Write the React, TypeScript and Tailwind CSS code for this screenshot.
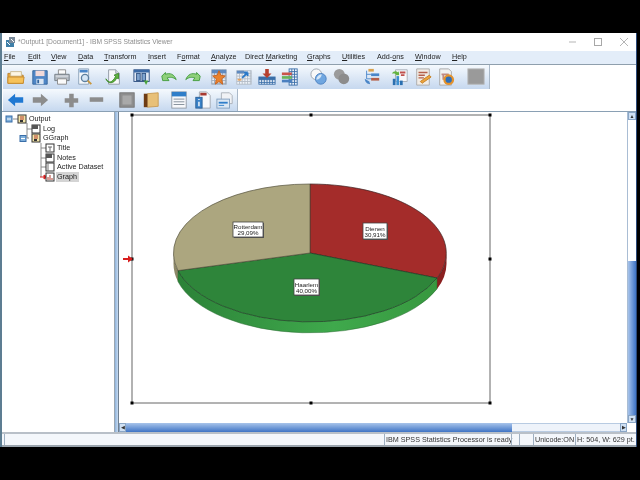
import type { ReactNode } from "react";

const font = "font-['Liberation_Sans',Arial,sans-serif]";

const menus: [string, string, string][] = [
    ["", "F", "ile"],
    ["", "E", "dit"],
    ["", "V", "iew"],
    ["", "D", "ata"],
    ["", "T", "ransform"],
    ["", "I", "nsert"],
    ["F", "o", "rmat"],
    ["", "A", "nalyze"],
    ["Direct ", "M", "arketing"],
    ["", "G", "raphs"],
    ["", "U", "tilities"],
    ["Add-", "o", "ns"],
    ["", "W", "indow"],
    ["", "H", "elp"],
];

const menuSpacing = ["w-[24px]", "w-[23px]", "w-[27px]", "w-[26px]", "w-[44px]", "w-[29px]", "w-[34px]", "w-[34px]", "w-[62px]", "w-[35px]", "w-[35px]", "w-[38px]", "w-[37px]", "w-[30px]"];

function Doc({ children }: { children?: ReactNode }) {
    return (
        <>
            <path d="M4 2h8l4 4v12H4z" fill="#f7f8fb" stroke="#8f97a3" />
            <path d="M12 2v4h4" fill="#dfe4ea" stroke="#8f97a3" />
            {children}
        </>
    );
}

function Grid({ x, y, w, h, color = "#3a6ea8" }: { x: number; y: number; w: number; h: number; color?: string }) {
    const lines = [];
    for (let i = x + 3; i < x + w; i += 3) lines.push(<path key={"v" + i} d={`M${i} ${y}v${h}`} stroke={color} />);
    for (let j = y + 3; j < y + h; j += 3) lines.push(<path key={"h" + j} d={`M${x} ${j}h${w}`} stroke={color} />);
    return (
        <>
            <rect x={x} y={y} width={w} height={h} fill="#eef3fa" stroke={color} />
            {lines}
        </>
    );
}

const toolIcons: Record<string, ReactNode> = {
    folder: (
        <>
            <path d="M1 6h7l2 2h8v9H1z" fill="#e9a83c" stroke="#b9802c" />
            <path d="M4 4h12v5H4z" fill="#fdf6e3" stroke="#c9b98e" />
            <path d="M1 10h18l-1 7H1z" fill="#f6c25a" stroke="#c58a2e" />
        </>
    ),
    save: (
        <>
            <path d="M2 3h16v15H2z" fill="#4f86c6" stroke="#33649c" />
            <rect x="5" y="3" width="10" height="6" fill="#f1d9d9" />
            <rect x="6" y="12" width="8" height="6" fill="#dbe6f3" />
            <rect x="7" y="13" width="2" height="4" fill="#33649c" />
        </>
    ),
    print: (
        <>
            <path d="M6 2h8v5H6z" fill="#fafafa" stroke="#888" />
            <path d="M2 7h16v7H2z" fill="#b5bcc4" stroke="#727a82" />
            <path d="M5 12h10v6H5z" fill="#fafafa" stroke="#888" />
            <path d="M3 9h14" stroke="#e6e9ec" />
        </>
    ),
    preview: (
        <>
            <path d="M3 1h11v17H3z" fill="#f5f8fc" stroke="#8aa0b8" />
            <path d="M4 2h9v3H4z" fill="#4a86c8" />
            <circle cx="10" cy="11" r="4" fill="#d5e6f6" stroke="#5d7f9f" strokeWidth="1.5" />
            <path d="M13 14l4 4" stroke="#c8963c" strokeWidth="2" />
        </>
    ),
    exportDoc: (
        <>
            <Doc />
            <path d="M1 12c3 5 7 5 11-3l-2-1 5-2v6l-2-1c-3 7-10 7-12 1z" fill="#63b33f" stroke="#3d8a2b" />
        </>
    ),
    goto: (
        <>
            <rect x="1" y="2" width="17" height="13" fill="#dfe7f3" stroke="#2d4f80" />
            <rect x="1" y="2" width="17" height="3" fill="#3b6aa6" />
            <rect x="4" y="6" width="4" height="8" fill="#7fa4cf" stroke="#2d4f80" />
            <rect x="10" y="6" width="4" height="8" fill="#7fa4cf" stroke="#2d4f80" />
            <path d="M12 14h5l-2.500 5z" fill="#4aa339" />
        </>
    ),
    undo: <path d="M2 9l4-4v2c5-2 10 0 12 6-3-3-7-3-10-2l2 3H3z" fill="#8ed07a" stroke="#3f9a3a" />,
    redo: <path d="M18 9l-4-4v2c-5-2-10 0-12 6 3-3 7-3 10-2l-2 3h7z" fill="#8ed07a" stroke="#3f9a3a" />,
    pivot: (
        <>
            <Grid x={2} y={2} w={16} h={16} color="#9aa7b5" />
            <rect x="2" y="2" width="16" height="4" fill="#5e8ac0" />
            <path d="M10 3l2 5 5 1-4 3 1 6-4-3-4 3 1-6-4-3 5-1z" fill="#e9822c" stroke="#c8611d" />
        </>
    ),
    chartBuilder: (
        <>
            <Grid x={2} y={3} w={16} h={15} color="#b3bcc7" />
            <rect x="2" y="3" width="8" height="3" fill="#5e8ac0" />
            <path d="M8 11l6-6M14 5h-4M14 5v4" stroke="#2a78c8" strokeWidth="2" fill="none" />
            <rect x="3" y="12" width="4" height="2" fill="#e9a45c" />
        </>
    ),
    insertRows: (
        <>
            <Grid x={1} y={10} w={18} h={8} />
            <rect x="1" y="10" width="18" height="3" fill="#3a6ea8" />
            <path d="M8 1h4v5h3l-5 5-5-5h3z" fill="#b5402f" />
        </>
    ),
    columns: (
        <>
            <Grid x={9} y={1} w={9} h={18} />
            <rect x="1" y="5" width="11" height="3" fill="#c9544a" />
            <rect x="1" y="9" width="11" height="3" fill="#68b35a" />
            <rect x="1" y="13" width="11" height="3" fill="#4a7fc0" />
        </>
    ),
    venn: (
        <>
            <circle cx="7" cy="7" r="6" fill="#f8f8f8" stroke="#9aa3ad" />
            <circle cx="12" cy="12" r="6" fill="#6fa6e0" stroke="#4a7fc0" />
            <path d="M7 13a6 6 0 0 0 6-6 6 6 0 0 0-6 6z" fill="#d5e6f6" />
        </>
    ),
    vennGray: (
        <>
            <circle cx="7" cy="7" r="6" fill="#9b9b9b" />
            <circle cx="12" cy="12" r="6" fill="#8c8c8c" />
        </>
    ),
    split: (
        <>
            <rect x="6" y="1" width="6" height="3" fill="#d9a24f" />
            <rect x="9" y="6" width="9" height="3" fill="#4a86c8" />
            <rect x="9" y="11" width="9" height="3" fill="#b5604a" />
            <path d="M4 3v9M4 7h5M4 12h5" stroke="#4a86c8" fill="none" />
            <path d="M2 12c0 4 3 6 6 6l-1-3z" fill="#4a86c8" />
        </>
    ),
    chartDoc: (
        <>
            <path d="M5 2h13v13H5z" fill="#f7f8fb" stroke="#a6adb6" />
            <path d="M10 5h6M11 8h4" stroke="#c0504d" strokeWidth="2" />
            <path d="M1 6c2-3 5-3 7-1l1-2v5H4l2-1c-1-1-3-1-5-1z" fill="#63b33f" />
            <rect x="2" y="12" width="3" height="7" fill="#2a6fb0" />
            <rect x="6" y="9" width="3" height="10" fill="#3d8fd0" />
            <rect x="10" y="14" width="3" height="5" fill="#2a6fb0" />
        </>
    ),
    editDoc: (
        <>
            <path d="M3 1h14v18H3z" fill="#f1ece6" stroke="#a9a9a9" />
            <path d="M5 5h10M5 8h7M5 11h6" stroke="#b5604a" strokeWidth="1.500" />
            <path d="M7 15l10-7 2 2-10 7z" fill="#eda53c" stroke="#c27d22" />
        </>
    ),
    playDoc: (
        <>
            <path d="M3 1h10l3 3v15H3z" fill="#f1f1f1" stroke="#a6a6a6" />
            <path d="M5 7h8M7 7v6" stroke="#c08a82" strokeWidth="2" />
            <circle cx="13" cy="13" r="6" fill="#e4922c" />
            <circle cx="13" cy="13" r="3.500" fill="#2f6fb8" />
        </>
    ),
    grayBox: <rect x="1" y="1" width="18" height="17" fill="#9a9a9a" stroke="#b5b5b5" />,
    back: <path d="M1 10l8-7v4h9v6H9v4z" fill="#1f78d2" />,
    forward: <path d="M19 10l-8-7v4H2v6h9v4z" fill="#8c8c8c" />,
    plus: <path d="M8 3h5v5h5v5h-5v5H8v-5H3V8h5z" fill="#8c8c8c" />,
    minus: <rect x="3" y="7" width="15" height="5" fill="#8c8c8c" />,
    graySafe: (
        <>
            <rect x="2" y="2" width="16" height="16" fill="#8e8e8e" stroke="#757575" />
            <rect x="5" y="5" width="10" height="10" fill="#a9a9a9" />
        </>
    ),
    book: (
        <>
            <path d="M6 3l12-1v15L6 18z" fill="#e8c078" stroke="#c79a52" />
            <rect x="2" y="3" width="4" height="15" fill="#6e3c14" />
        </>
    ),
    listWindow: (
        <>
            <rect x="2" y="1" width="16" height="18" fill="#f7f8fb" stroke="#8f97a3" />
            <rect x="2" y="1" width="16" height="5" fill="#2f7ec9" />
            <path d="M4 9h12M4 12h12M4 15h12" stroke="#7d8894" />
        </>
    ),
    infoDoc: (
        <>
            <path d="M6 1h8l4 4v14H6z" fill="#f7f8fb" stroke="#a0a7b0" />
            <path d="M7 2h7v3H7z" fill="#a83a32" />
            <rect x="2" y="7" width="7" height="12" fill="#3a82c8" stroke="#2a5f96" />
            <path d="M5.500 9v1M5.500 12v5" stroke="#fff" strokeWidth="1.500" />
        </>
    ),
    swapDoc: (
        <>
            <path d="M6 2h9l3 3v9H6z" fill="#f0f2f5" stroke="#a9afb7" />
            <rect x="1" y="9" width="14" height="10" fill="#dbe7f4" stroke="#7f9dbd" />
            <path d="M3 13h10" stroke="#2f7ec9" strokeWidth="2" />
            <path d="M3 16h6" stroke="#2f7ec9" />
        </>
    ),
};

const toolbarOne: [string, string][] = [
    ["folder", "ml-[4px]"], ["save", "ml-[4px]"], ["print", "ml-[2px]"], ["preview", "ml-[3px]"],
    ["exportDoc", "ml-[9px]"], ["goto", "ml-[8px]"], ["undo", "ml-[7px]"], ["redo", "ml-[4px]"],
    ["pivot", "ml-[6px]"], ["chartBuilder", "ml-[5px]"], ["insertRows", "ml-[3px]"], ["columns", "ml-[3px]"],
    ["venn", "ml-[9px]"], ["vennGray", "ml-[3px]"], ["split", "ml-[10px]"], ["chartDoc", "ml-[8px]"],
    ["editDoc", "ml-[3px]"], ["playDoc", "ml-[3px]"], ["grayBox", "ml-[10px]"],
];

const toolbarTwo: [string, string][] = [
    ["back", "ml-[4px]"], ["forward", "ml-[4px]"], ["plus", "ml-[11px]"], ["minus", "ml-[5px]"],
    ["graySafe", "ml-[11px]"], ["book", "ml-[4px]"], ["listWindow", "ml-[8px]"], ["infoDoc", "ml-[4px]"],
    ["swapDoc", "ml-[2px]"],
];

function Toolbar({ items, className }: { items: [string, string][]; className: string }) {
    return (
        <div className={"flex items-center bg-gradient-to-b from-[#f5f9fd] to-[#c6d8ef] border-r border-[#a9b8c8] " + className}>
            {items.map(([name, margin]) => (
                <svg key={name} viewBox="0 0 20 20" className={"w-[18px] h-[18px] shrink-0 mr-[2px] " + margin}>
                    {toolIcons[name]}
                </svg>
            ))}
        </div>
    );
}

function TreeIcon({ kind }: { kind: string }) {
    return (
        <svg viewBox="0 0 10 10" className="w-[10px] h-[10px] shrink-0">
            <rect x="1" y="1" width="8" height="8" fill={kind === "book" ? "#f4e6a8" : "#fff"} stroke="#333" />
            {kind === "book" && <path d="M3 3h4M3 5h4" stroke="#b03a2e" />}
            {kind === "book" && <rect x="3" y="6" width="3" height="2" fill="#333" />}
            {kind === "note" && <rect x="1" y="1" width="6" height="4" fill="#555" />}
            {kind === "title" && <path d="M3 4h4M5 4v4" stroke="#666" />}
            {kind === "doc" && <path d="M3 1v8" stroke="#777" />}
            {kind === "graph" && <path d="M3 8V5M5 8V3M7 8V6" stroke="#b03a2e" />}
        </svg>
    );
}

function TreeRow({ indent, icon, label, selected }: { indent: string; icon: string; label: string; selected?: boolean }) {
    return (
        <div className={"h-[9.7px] flex items-center " + indent}>
            <TreeIcon kind={icon} />
            <span className={"ml-[1px] px-[1px] leading-[10px] text-[7.2px] text-[#222] " + (selected ? "bg-[#d4d4d4] pr-[2px]" : "")}>{label}</span>
        </div>
    );
}

function ChartLabel({ x, y, w, h, lines }: { x: number; y: number; w: number; h: number; lines: [string, string] }) {
    const cx = x + w / 2;
    return (
        <g>
            <rect x={x + 1} y={y + 1} width={w} height={h} fill="#555" />
            <rect x={x} y={y} width={w} height={h} fill="#fff" stroke="#444" strokeWidth="0.8" />
            <text x={cx} y={y + h / 2 - 0.5} textAnchor="middle" fontSize="6.2" fill="#222">{lines[0]}</text>
            <text x={cx} y={y + h / 2 + 5.5} textAnchor="middle" fontSize="6.2" fill="#222">{lines[1]}</text>
        </g>
    );
}

function PieChart() {
    const handles = [[132, 115], [311, 115], [490, 115], [132, 259], [490, 259], [132, 403], [311, 403], [490, 403]];
    return (
        <svg viewBox="119 112 508 311" className="w-full h-full block">
            <defs>
                <linearGradient id="greenSide" x1="0" x2="1" y1="0" y2="0">
                    <stop offset="0" stopColor="#2c8238" />
                    <stop offset="0.6" stopColor="#3fa94c" />
                    <stop offset="1" stopColor="#37983f" />
                </linearGradient>
            </defs>
            <rect x="132" y="115" width="358" height="288" fill="none" stroke="#666" />
            {handles.map(([x, y]) => (
                <rect key={x + "-" + y} x={x - 1.5} y={y - 1.5} width="3" height="3" fill="#000" />
            ))}
            <path d="M123 258h5v-2.500l5 3.500-5 3.500V260h-5z" fill="#d81e1e" />

            <path d="M173.500 253A136.500 69 0 0 0 178 270.600L178 281.600A136.500 69 0 0 1 173.500 264Z" fill="#8d8868" />
            <path d="M437 278A136.500 69 0 0 0 446.500 253L446.500 264A136.500 69 0 0 1 437 289Z" fill="#8a1f1f" />
            <path d="M178 270.600A136.500 69 0 0 0 437 278L437 289A136.500 69 0 0 1 178 281.600Z" fill="url(#greenSide)" stroke="#2b6b33" strokeWidth="0.5" />

            <path d="M310 253L310 184A136.500 69 0 0 1 437 278Z" fill="#a42c2a" stroke="#3a2020" strokeWidth="0.7" />
            <path d="M310 253L437 278A136.500 69 0 0 1 178 270.600Z" fill="#2e853a" stroke="#1f3f25" strokeWidth="0.7" />
            <path d="M310 253L178 270.600A136.500 69 0 0 1 310 184Z" fill="#aca67f" stroke="#55523e" strokeWidth="0.7" />

            <ChartLabel x={233} y={222} w={30} h={15} lines={["Rotterdam", "29,09%"]} />
            <ChartLabel x={363} y={223} w={24} h={16} lines={["Dienen", "30,91%"]} />
            <ChartLabel x={294} y={279} w={25} h={16} lines={["Haarlem", "40,00%"]} />
        </svg>
    );
}

export default function App() {
    return (
        <div className={"w-[640px] h-[480px] bg-black overflow-hidden pt-[33px] blur-[0.35px] " + font}>
            <div className="w-[637px] h-[414px] bg-white flex flex-col border-l-2 border-r border-l-[#5d7d92] border-r-[#2b4a7a]">
                {/* title bar */}
                <div className="h-[18px] shrink-0 flex items-center">
                    <svg viewBox="0 0 12 12" className="w-[12px] h-[12px] ml-[3px]">
                        <rect x="1" y="4" width="8" height="7" fill="#3f7fa8" />
                        <rect x="4" y="1" width="6" height="6" fill="#7a8a9a" />
                        <path d="M2 6l3 3M6 3l3 3" stroke="#fff" />
                    </svg>
                    <span className="ml-[1px] text-[6.7px] text-[#8c8c8c]">*Output1 [Document1] - IBM SPSS Statistics Viewer</span>
                    <div className="ml-auto flex items-center text-[#a8a8a8]">
                        <svg viewBox="0 0 10 10" className="w-[10px] h-[10px]"><path d="M2 5h7" stroke="#b5b5b5" /></svg>
                        <svg viewBox="0 0 10 10" className="w-[10px] h-[10px] ml-[16px]"><rect x="1.500" y="1.500" width="7" height="7" fill="none" stroke="#a8a8a8" /></svg>
                        <svg viewBox="0 0 10 10" className="w-[10px] h-[10px] ml-[16px] mr-[7px]"><path d="M1 1l8 8M9 1l-8 8" stroke="#b5b5b5" /></svg>
                    </div>
                </div>

                {/* menu bar */}
                <div className="h-[14px] shrink-0 flex items-center bg-[#e3edf9] border-b border-[#8f9fad] pl-[2px] text-[7.2px] text-[#222]">
                    {menus.map(([before, key, after], i) => (
                        <span key={before + key + after} className={"whitespace-nowrap " + menuSpacing[i]}>
                            {before}<span className="underline">{key}</span>{after}
                        </span>
                    ))}
                </div>

                {/* toolbars */}
                <div className="shrink-0 h-[47px] flex flex-col border-b border-[#8aa0b4] pl-[1px]">
                    <Toolbar items={toolbarOne} className="w-[487px] h-[24px]" />
                    <Toolbar items={toolbarTwo} className="w-[235px] h-[22px]" />
                </div>

                {/* panes */}
                <div className="flex-1 min-h-0 flex">
                    <div className="w-[113px] shrink-0 bg-white relative pt-[2px] border-r border-[#9aa6b2]">
                        <svg viewBox="2 112 113 320" className="absolute left-0 top-0 w-[113px] h-[320px]">
                            <path d="M27 123v15M27 129h8M27 138h2M41 143v34M41 148h8M41 158h8M41 167h8" stroke="#8a8a8a" fill="none" />
                            <path d="M13 119h8" stroke="#8a8a8a" />
                            <rect x="6" y="116" width="6" height="6" fill="#7fb0dc" stroke="#3a6ea8" />
                            <path d="M7 119h4" stroke="#fff" />
                            <rect x="20" y="135.500" width="6" height="6" fill="#7fb0dc" stroke="#3a6ea8" />
                            <path d="M21 138.500h4" stroke="#fff" />
                            <path d="M40 177h4M44 175l3 2-3 2z" fill="#d81e1e" stroke="#d81e1e" />
                        </svg>
                        <div className="relative">
                            <TreeRow indent="pl-[15px]" icon="book" label="Output" />
                            <TreeRow indent="pl-[29px]" icon="note" label="Log" />
                            <TreeRow indent="pl-[29px]" icon="book" label="GGraph" />
                            <TreeRow indent="pl-[43px]" icon="title" label="Title" />
                            <TreeRow indent="pl-[43px]" icon="note" label="Notes" />
                            <TreeRow indent="pl-[43px]" icon="doc" label="Active Dataset" />
                            <TreeRow indent="pl-[43px]" icon="graph" label="Graph" selected />
                        </div>
                    </div>

                    {/* splitter */}
                    <div className="w-[3px] shrink-0 bg-gradient-to-r from-[#8fb4dc] to-[#c7daf0]" />

                    <div className="flex-1 min-w-0 flex flex-col border-l border-[#6f7f90]">
                        <div className="flex-1 min-h-0 flex">
                            <div className="flex-1 min-w-0 bg-white">
                                <PieChart />
                            </div>
                            {/* vertical scrollbar */}
                            <div className="w-[9px] shrink-0 flex flex-col border-l border-[#a9bdd4]">
                                <div className="h-[8px] bg-[#cfe0f3] border border-[#8aa6c6] flex items-center justify-center text-[5px] text-[#333] leading-none">▲</div>
                                <div className="flex-[140] bg-white" />
                                <div className="flex-[153] bg-gradient-to-r from-[#a8c4ea] to-[#3f74c4]" />
                                <div className="h-[8px] bg-[#cfe0f3] border border-[#8aa6c6] flex items-center justify-center text-[5px] text-[#333] leading-none">▼</div>
                            </div>
                        </div>
                        {/* horizontal scrollbar */}
                        <div className="h-[9px] shrink-0 flex pr-[9px]">
                            <div className="w-[7px] bg-[#cfe0f3] border border-[#8aa6c6] flex items-center justify-center text-[5px] text-[#333] leading-none">◀</div>
                            <div className="w-[386px] bg-gradient-to-b from-[#a8c4ea] to-[#3f74c4]" />
                            <div className="flex-1 bg-[#eef3fa] border-y border-[#b8cbe2]" />
                            <div className="w-[7px] bg-[#cfe0f3] border border-[#8aa6c6] flex items-center justify-center text-[5px] text-[#333] leading-none">▶</div>
                        </div>
                    </div>
                </div>

                {/* status bar */}
                <div className="h-[15px] shrink-0 flex items-stretch bg-[#f4f7fb] border-t-2 border-b-2 border-t-[#b9c0c8] border-b-[#9aa4ad] text-[7.2px] text-[#333] pl-[2px] leading-[11px]">
                    <div className="w-[380px] border-l border-[#9fb0c2]" />
                    <div className="w-[127px] border-l border-[#9fb0c2] pl-[1px] whitespace-nowrap">IBM SPSS Statistics Processor is ready</div>
                    <div className="w-[8px] border-l border-[#9fb0c2]" />
                    <div className="w-[14px] border-l border-[#9fb0c2]" />
                    <div className="w-[42px] border-l border-[#9fb0c2] pl-[1px] whitespace-nowrap">Unicode:ON</div>
                    <div className="flex-1 border-l border-[#9fb0c2] pl-[1px] whitespace-nowrap">H: 504, W: 629 pt.</div>
                </div>
            </div>
        </div>
    );
}
